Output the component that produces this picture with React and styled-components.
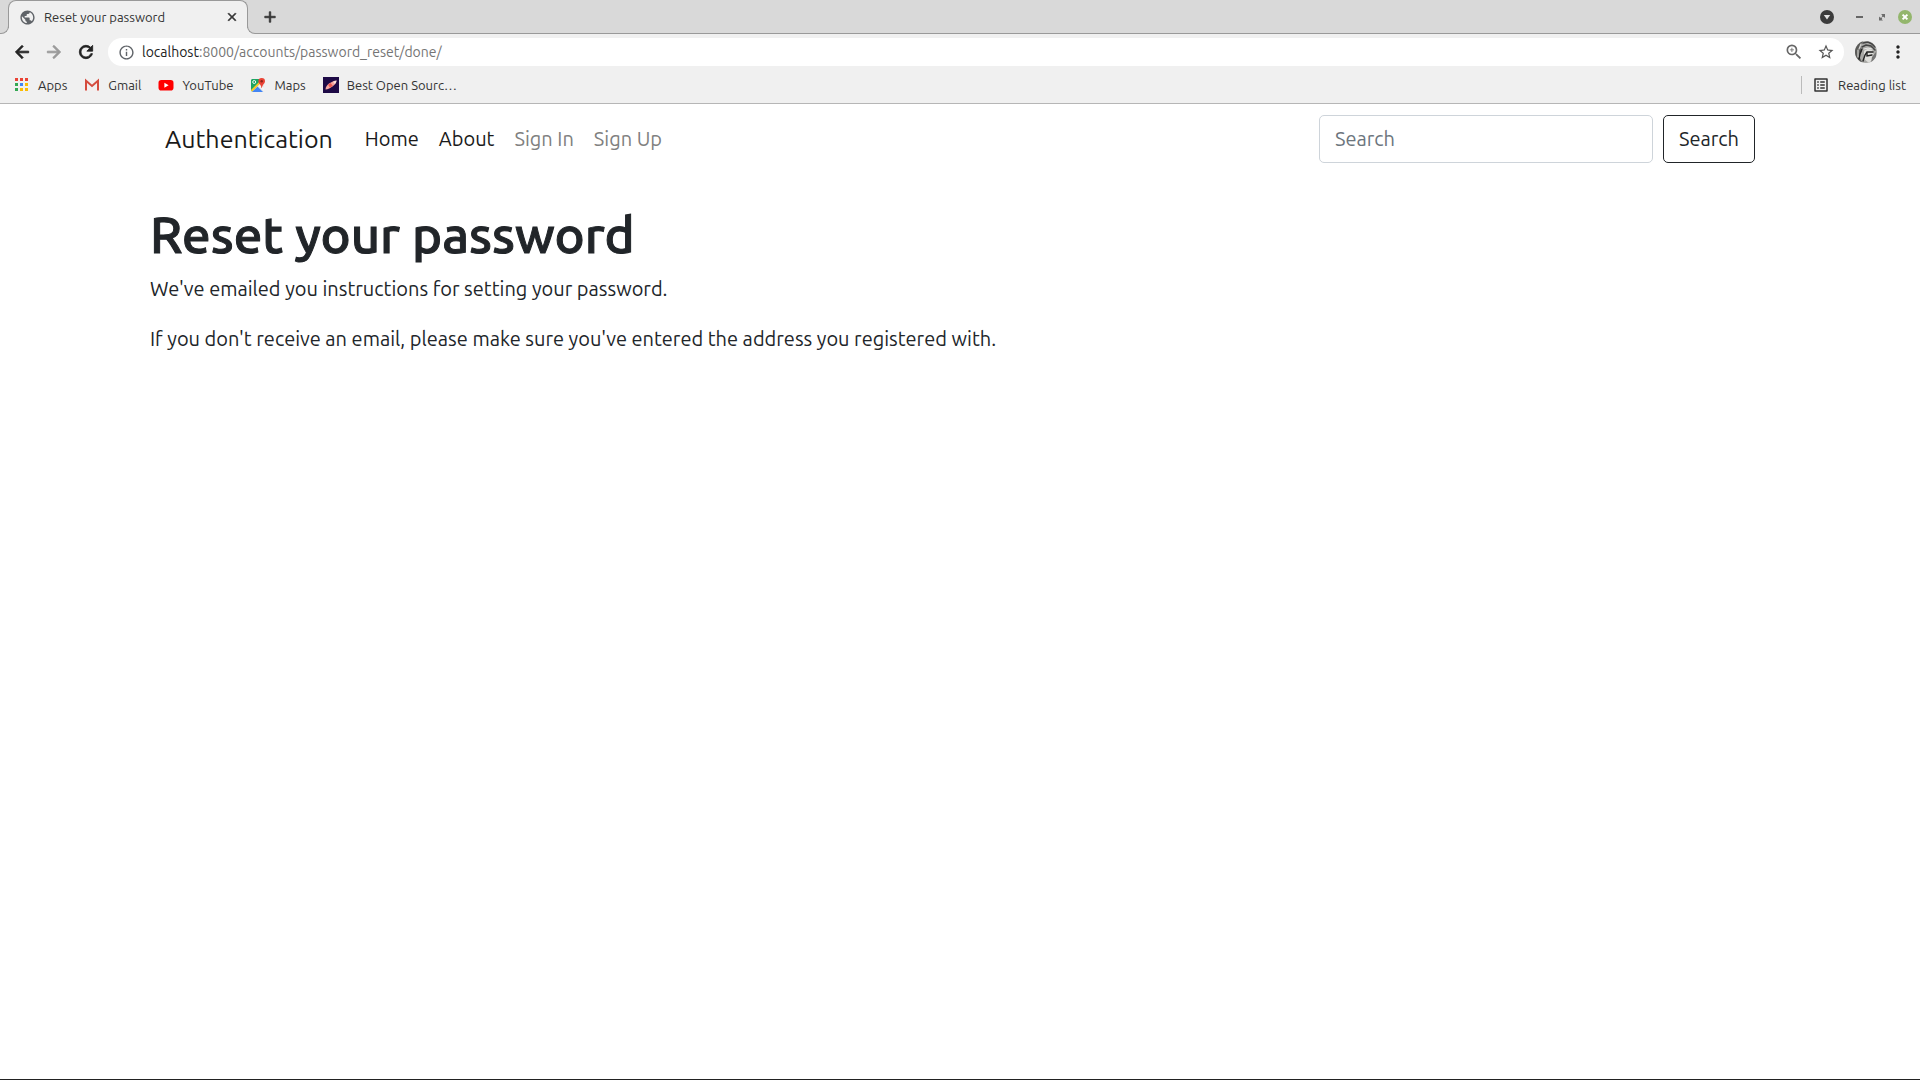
import React from "react";
import styled, { createGlobalStyle } from "styled-components";
import {
  MdArrowBack,
  MdArrowForward,
  MdRefresh,
  MdInfoOutline,
  MdZoomIn,
  MdStarBorder,
  MdMoreVert,
  MdListAlt,
  MdClose,
  MdAdd,
  MdPublic,
} from "react-icons/md";

const GlobalStyle = createGlobalStyle`
  *, *::before, *::after { box-sizing: border-box; }
  body { margin: 0; background: #fff; font-family: Ubuntu, "Noto Sans", sans-serif; }
  button, input { font-family: inherit; }
  svg { display: block; flex: none; }
`;

const chromeBg = "#f0f0f0";
const stripBg = "#d9d9d9";
const line = "#999";

const Screen = styled.div`
  min-height: 100vh;
  display: flex;
  flex-direction: column;
  border-bottom: 1px solid #222;
`;

const TabStrip = styled.div`
  display: flex;
  height: 34px;
  background: linear-gradient(${stripBg} 16px, ${chromeBg} 16px);
`;

const StripStart = styled.div`
  align-self: flex-end;
  width: 9px;
  height: 24px;
  background: ${stripBg};
  border: solid ${line};
  border-width: 0 1px 1px 0;
  border-bottom-right-radius: 8px;
`;

const StripRest = styled.div`
  align-self: flex-end;
  flex: 1;
  height: 24px;
  margin-left: -1px;
  padding: 0 8px 9px 14px;
  display: flex;
  align-items: center;
  background: ${stripBg};
  border: solid ${line};
  border-width: 0 0 1px 1px;
  border-bottom-left-radius: 8px;
`;

const Tab = styled.div`
  width: 240px;
  height: 28px;
  margin-left: -1px;
  padding: 5px 8px 0 10px;
  display: flex;
  align-items: center;
  gap: 8px;
  background: ${chromeBg};
  border: solid ${line};
  border-width: 1px 1px 0;
  border-radius: 8px 8px 0 0;
  color: #5f6368;
`;

const TabTitle = styled.span`
  flex: 1;
  font-size: 13px;
  line-height: 16px;
  color: #333;
  white-space: nowrap;
`;

const IconButton = styled.button`
  flex: none;
  width: ${(p) => p.$size || 16}px;
  height: ${(p) => p.$size || 16}px;
  padding: 0;
  border: 0;
  background: none;
  color: ${(p) => p.$color || "#333"};
  display: flex;
  align-items: center;
  justify-content: center;

  path:not([fill="none"]) { stroke-width: ${(p) => (p.$bold ? 1 : 0)}px; }
  path[fill="none"] { stroke: none; }
`;

const WindowControls = styled.div`
  margin-left: auto;
  display: flex;
  align-items: center;
  gap: 9px;
`;

const ListTabs = styled(IconButton)`
  margin-right: 9px;
`;

const Toolbar = styled.div`
  display: flex;
  align-items: center;
  height: 36px;
  padding: 0 12px;
  background: ${chromeBg};
`;

const NavButtons = styled.div`
  display: flex;
  gap: 12px;
  margin-right: 12px;
`;

const Omnibox = styled.div`
  flex: 1;
  height: 28px;
  padding: 0 9px 0 10px;
  display: flex;
  align-items: center;
  gap: 8px;
  border-radius: 14px;
  background: #fff;
`;

const Address = styled.div`
  flex: 1;
  font-size: 14px;
  line-height: 20px;
  color: #757575;
  white-space: nowrap;

  span { color: #222; }
`;

const OmniboxActions = styled.div`
  display: flex;
  gap: 14px;
`;

const Profile = styled.div`
  display: flex;
  align-items: center;
  gap: 11px;
  margin-left: 11px;
`;

const BookmarksBar = styled.nav`
  display: flex;
  align-items: center;
  gap: 17px;
  height: 34px;
  padding: 0 14px 3px;
  background: ${chromeBg};
  border-bottom: 1px solid #b6b6b6;
`;

const Bookmark = styled.a`
  display: flex;
  align-items: center;
  gap: 8px;
  font-size: 13px;
  line-height: 16px;
  color: #333;
  text-decoration: none;
  white-space: nowrap;
`;

const ReadingList = styled.div`
  margin-left: auto;
  padding-left: 10px;
  border-left: 1px solid #bbb;
`;

const Container = styled.div`
  width: 100%;
  max-width: 1650px;
  margin: 0 auto;
  padding: 0 15px;
`;

const Navbar = styled.nav`
  display: flex;
  align-items: center;
  padding: 11px 15px 10px;
`;

const Brand = styled.a`
  margin-right: 22px;
  font-size: 25px;
  line-height: 38px;
  color: #1a1a1a;
  text-decoration: none;
`;

const NavList = styled.ul`
  flex: 1;
  display: flex;
  margin: 0;
  padding: 0;
  list-style: none;
`;

const NavLink = styled.a`
  display: block;
  padding: 0 10px;
  font-size: 20px;
  line-height: 30px;
  color: ${(p) => (p.$muted ? "#808080" : "#1a1a1a")};
  text-decoration: none;
`;

const SearchForm = styled.form`
  display: flex;
  gap: 10px;
`;

const SearchInput = styled.input`
  width: 334px;
  height: 48px;
  padding: 0 15px 2px;
  border: 1px solid #ced4da;
  border-radius: 5px;
  font-size: 20px;
  line-height: 30px;
  color: #212529;

  &::placeholder { color: #6c757d; opacity: 1; }
`;

const SearchButton = styled.button`
  height: 48px;
  padding: 0 15px;
  border: 1px solid #212529;
  border-radius: 5px;
  background: transparent;
  font-size: 20px;
  line-height: 30px;
  color: #212529;
`;

const Content = styled.main`
  padding-top: 31px;
`;

const Title = styled.h1`
  margin: 0 0 10px;
  font-size: 51px;
  font-weight: 500;
  line-height: 60px;
  color: #212529;
  -webkit-text-stroke: 1px #212529;
`;

const Text = styled.p`
  margin: 0 0 20px;
  font-size: 20px;
  line-height: 30px;
  color: #212529;
`;

const AppsIcon = () => {
  const colors = ["#ea4335", "#ea4335", "#ea4335", "#34a853", "#4285f4", "#fbbc04", "#34a853", "#fbbc04", "#fbbc04"];
  return (
    <svg width="16" height="16" viewBox="0 0 16 16">
      {colors.map((c, i) => (
        <rect key={i} x={1 + (i % 3) * 5} y={1 + Math.floor(i / 3) * 5} width="3" height="3" fill={c} />
      ))}
    </svg>
  );
};

const GmailIcon = () => (
  <svg width="16" height="16" viewBox="0 0 16 16">
    <rect x="1" y="3" width="14" height="11" rx="1" fill="#f3eeee" />
    <path d="M2 13.6V3.8L8 9l6-5.2v9.8" fill="none" stroke="#d54b3d" strokeWidth="2" />
  </svg>
);

const YouTubeIcon = () => (
  <svg width="16" height="16" viewBox="0 0 16 16">
    <rect x="0.5" y="3" width="15" height="10.5" rx="2.8" fill="#f00" />
    <path d="M6.4 5.8v5l4.2-2.5z" fill="#fff" />
  </svg>
);

const MapsIcon = () => (
  <svg width="16" height="16" viewBox="0 0 16 16">
    <rect x="1" y="2" width="13" height="13" rx="1" fill="#e8e8e8" />
    <path d="M2 2h9v3L2 14.500 1 13V3z" fill="#1da462" />
    <path d="M1.800 15 7.500 9.500 13 15z" fill="#4285f4" />
    <path d="M8.500 8.500 11 7.500 14 11v3.500z" fill="#f5f5f5" />
    <path d="M1 13 8.800 5.200l1.200 1.600L2 14.800z" fill="#fbc926" />
    <circle cx="4.200" cy="5" r="1.500" fill="none" stroke="#fff" strokeWidth="0.900" />
    <path d="M11.700 1a3.300 3.300 0 0 1 3.300 3.300c0 2.300-2.500 3-3.100 6.700h-.4C11 7.300 8.400 6.600 8.400 4.300A3.300 3.300 0 0 1 11.700 1z" fill="#ea4335" />
    <circle cx="11.700" cy="4.200" r="1.200" fill="#8c2318" />
  </svg>
);

const RocketIcon = () => (
  <svg width="16" height="16" viewBox="0 0 16 16">
    <rect width="16" height="16" fill="#1e0a46" />
    <path d="M2.500 12.500C2.500 10 4 8 6 6.500 8.500 5 11 3.600 13.500 3.500c0 2.500-2 4.500-4 6-2 1.600-4.500 2.800-7 3z" fill="#f6a5a0" />
    <path d="M5 7.800 7.600 6l2.200 2.800-2.800 2z" fill="#ee5b52" />
    <path d="M10 4.800 13.500 3.500c-.2 1.500-.8 2.500-1.600 3.500z" fill="#ffe6dc" />
  </svg>
);

const ListTabsIcon = () => (
  <svg width="14" height="14" viewBox="0 0 14 14">
    <circle cx="7" cy="7" r="7" fill="#3c3c3c" />
    <path d="M3.800 5h6.400L7 9.400z" fill="#e4e4e4" />
  </svg>
);

const MinimizeIcon = () => (
  <svg width="14" height="14" viewBox="0 0 14 14">
    <rect x="4" y="6" width="7" height="2" fill="#666" />
  </svg>
);

const RestoreIcon = () => (
  <svg width="14" height="14" viewBox="0 0 14 14" fill="#6c6c6c">
    <path d="M6 4h4v4L8.700 6.700 7.700 7.200 6.800 6.300 7.300 5.300z" />
    <path d="M8 10.500H4v-4l1.300 1.300 1-.5.9.9-.5 1z" />
  </svg>
);

const CloseIcon = () => (
  <svg width="14" height="14" viewBox="0 0 14 14">
    <circle cx="7" cy="7" r="7" fill="#93b66c" />
    <line x1="4.6" y1="4.6" x2="9.4" y2="9.4" stroke="#fff" strokeWidth="2" />
    <line x1="9.4" y1="4.6" x2="4.6" y2="9.4" stroke="#fff" strokeWidth="2" />
  </svg>
);

const Avatar = () => (
  <svg width="22" height="22" viewBox="0 0 22 22">
    <defs>
      <clipPath id="avatar"><circle cx="11" cy="11" r="11" /></clipPath>
    </defs>
    <g clipPath="url(#avatar)">
      <rect width="22" height="22" fill="#a9a9a6" />
      <path d="M0 0h8L5 6l2 4-3 5 3 6H0z" fill="#5a5a58" />
      <path d="M9 10c3-3 7-2 9 0l1 7-5 5-5-4z" fill="#dededb" />
      <g fill="none" strokeLinecap="round">
        <polyline points="8,2 13,1 17,3 20,6" stroke="#444" strokeWidth="1.6" />
        <polyline points="7,6 11,4 16,5 20,9" stroke="#444" strokeWidth="1.6" />
        <polyline points="8,20 10,14 12,11 18,11" stroke="#222" strokeWidth="1.4" />
        <polyline points="12,12 12,15 17,14" stroke="#222" strokeWidth="1.4" />
        <polyline points="7,8 5,13 4,18" stroke="#222" strokeWidth="1.4" />
        <polyline points="3,9 3,16" stroke="#d5d5d2" strokeWidth="1.2" />
        <polyline points="6,3 4,8" stroke="#d5d5d2" strokeWidth="1.2" />
        <polyline points="9,8 13,7 17,8" stroke="#e8e8e6" strokeWidth="1.2" />
      </g>
      <path d="M17 16l4-5v8l-5 3z" fill="#777" />
    </g>
  </svg>
);

const bookmarks = [
  ["Apps", AppsIcon],
  ["Gmail", GmailIcon],
  ["YouTube", YouTubeIcon],
  ["Maps", MapsIcon],
  ["Best Open Sourc…", RocketIcon],
];

const links = [
  ["Home", false],
  ["About", false],
  ["Sign In", true],
  ["Sign Up", true],
];

export default function App() {
  return (
    <Screen>
      <GlobalStyle />
      <header>
        <TabStrip>
          <StripStart />
          <Tab>
            <MdPublic size={17} />
            <TabTitle>Reset your password</TabTitle>
            <IconButton $size={14} $bold aria-label="Close tab"><MdClose size={14} /></IconButton>
          </Tab>
          <StripRest>
            <IconButton $bold aria-label="New tab"><MdAdd size={18} /></IconButton>
            <WindowControls>
              <ListTabs $size={14} aria-label="Search tabs"><ListTabsIcon /></ListTabs>
              <IconButton $size={14} aria-label="Minimize"><MinimizeIcon /></IconButton>
              <IconButton $size={14} aria-label="Restore"><RestoreIcon /></IconButton>
              <IconButton $size={14} aria-label="Close window"><CloseIcon /></IconButton>
            </WindowControls>
          </StripRest>
        </TabStrip>
        <Toolbar>
          <NavButtons>
            <IconButton $size={20} $bold $color="#222" aria-label="Back"><MdArrowBack size={20} /></IconButton>
            <IconButton $size={20} $bold $color="#999" aria-label="Forward"><MdArrowForward size={20} /></IconButton>
            <IconButton $size={20} $bold $color="#222" aria-label="Reload"><MdRefresh size={20} /></IconButton>
          </NavButtons>
          <Omnibox>
            <IconButton $color="#5f6368" aria-label="Site information"><MdInfoOutline size={17} /></IconButton>
            <Address><span>localhost</span>:8000/accounts/password_reset/done/</Address>
            <OmniboxActions>
              <IconButton $size={18} $color="#666" aria-label="Zoom"><MdZoomIn size={20} /></IconButton>
              <IconButton $size={18} $color="#555" aria-label="Bookmark this page"><MdStarBorder size={18} /></IconButton>
            </OmniboxActions>
          </Omnibox>
          <Profile>
            <IconButton $size={22} aria-label="Profile"><Avatar /></IconButton>
            <IconButton $size={20} $color="#222" aria-label="Menu"><MdMoreVert size={20} /></IconButton>
          </Profile>
        </Toolbar>
        <BookmarksBar aria-label="Bookmarks">
          {bookmarks.map(([name, Icon]) => (
            <Bookmark key={name} href="#"><Icon />{name}</Bookmark>
          ))}
          <ReadingList>
            <Bookmark href="#"><MdListAlt size={18} />Reading list</Bookmark>
          </ReadingList>
        </BookmarksBar>
      </header>
      <Container>
        <Navbar>
          <Brand href="#">Authentication</Brand>
          <NavList>
            {links.map(([name, muted]) => (
              <li key={name}><NavLink href="#" $muted={muted}>{name}</NavLink></li>
            ))}
          </NavList>
          <SearchForm>
            <SearchInput type="search" placeholder="Search" aria-label="Search" />
            <SearchButton type="button">Search</SearchButton>
          </SearchForm>
        </Navbar>
        <Content>
          <Title>Reset your password</Title>
          <Text>We've emailed you instructions for setting your password.</Text>
          <Text>If you don't receive an email, please make sure you've entered the address you registered with.</Text>
        </Content>
      </Container>
    </Screen>
  );
}
